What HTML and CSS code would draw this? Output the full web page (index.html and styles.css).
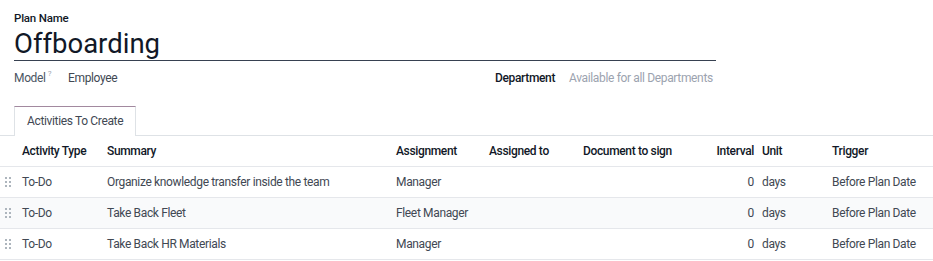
FILE: index.html
```html
<!DOCTYPE html>
<html>
<head>
<meta charset="utf-8">
<link rel="stylesheet" href="styles.css">
</head>
<body>
<div class="sheet">
  <div class="title-block">
    <label class="title-label">Plan Name</label>
    <div class="title-input">Offboarding</div>
  </div>
  <div class="fields">
    <div class="field field-left">
      <span class="flabel">Model<sup class="help">?</sup></span>
      <span class="fvalue">Employee</span>
    </div>
    <div class="field field-right">
      <span class="flabel strong">Department</span>
      <span class="fvalue placeholder">Available for all Departments</span>
    </div>
  </div>
</div>
<div class="tabs">
  <div class="tab active">Activities To Create</div>
</div>
<table class="list">
  <colgroup>
    <col class="w-handle"><col class="w-type"><col class="w-summary"><col class="w-assign"><col class="w-to"><col class="w-doc"><col class="w-int"><col class="w-unit"><col>
  </colgroup>
  <thead>
    <tr>
      <th></th>
      <th>Activity Type</th>
      <th>Summary</th>
      <th>Assignment</th>
      <th>Assigned to</th>
      <th>Document to sign</th>
      <th class="num">Interval</th>
      <th>Unit</th>
      <th>Trigger</th>
    </tr>
  </thead>
  <tbody>
    <tr>
      <td class="c-handle"><span class="handle"></span></td>
      <td>To-Do</td>
      <td>Organize knowledge transfer inside the team</td>
      <td>Manager</td>
      <td></td>
      <td></td>
      <td class="num">0</td>
      <td>days</td>
      <td>Before Plan Date</td>
    </tr>
    <tr class="alt">
      <td class="c-handle"><span class="handle"></span></td>
      <td>To-Do</td>
      <td>Take Back Fleet</td>
      <td>Fleet Manager</td>
      <td></td>
      <td></td>
      <td class="num">0</td>
      <td>days</td>
      <td>Before Plan Date</td>
    </tr>
    <tr>
      <td class="c-handle"><span class="handle"></span></td>
      <td>To-Do</td>
      <td>Take Back HR Materials</td>
      <td>Manager</td>
      <td></td>
      <td></td>
      <td class="num">0</td>
      <td>days</td>
      <td>Before Plan Date</td>
    </tr>
  </tbody>
</table>
</body>
</html>
```
FILE: styles.css
```css
* { box-sizing: border-box; }
body {
  margin: 0;
  background: #fff;
  font-family: Roboto, "Liberation Sans", sans-serif;
  font-size: 12px;
  letter-spacing: -0.35px;
  color: #414853;
}
.sheet {
  padding: 10px 0 0 14px;
  width: 716px;
}
.title-label {
  display: block;
  font-size: 11.5px;
  font-weight: 500;
  color: #111827;
  line-height: 16px;
  letter-spacing: -0.2px;
}
.title-input {
  font-size: 27.5px;
  line-height: 32px;
  color: #111827;
  border-bottom: 1px solid #374151;
  padding-top: 2px;
  white-space: nowrap;
  letter-spacing: 0;
}
.fields {
  display: flex;
  margin-top: 8px;
  height: 18px;
  line-height: 18px;
  white-space: nowrap;
}
.field { display: flex; flex-shrink: 0; }
.field-left { width: 481px; }
.flabel { color: #4b5563; width: 54px; flex-shrink: 0; }
.flabel.strong { color: #111827; font-weight: 500; width: 74px; }
.help { font-size: 8px; color: #9ca3af; vertical-align: top; line-height: 10px; margin-left: 2px; }
.fvalue { color: #414853; }
.placeholder { color: #9ca3af; }
.tabs {
  margin-top: 19px;
  border-bottom: 1px solid #dee2e6;
  padding-left: 14px;
  display: flex;
  height: 30px;
}
.tab {
  padding: 0 12px;
  line-height: 29px;
  color: #414853;
  white-space: nowrap;
}
.tab.active {
  border-top: 1px solid #a2899f;
  border-left: 1px solid #dee2e6;
  border-right: 1px solid #dee2e6;
  background: #fff;
  margin-bottom: -1px;
  height: 30px;
  width: 122px;
}
.list {
  width: 100%;
  border-collapse: collapse;
  table-layout: fixed;
}
.w-handle { width: 18px; }
.w-type { width: 85px; }
.w-summary { width: 289px; }
.w-assign { width: 93px; }
.w-to { width: 94px; }
.w-doc { width: 109px; }
.w-int { width: 70px; }
.w-unit { width: 70px; }
.list th, .list td {
  height: 31px;
  padding: 0 4px;
  text-align: left;
  white-space: nowrap;
  overflow: hidden;
  border-bottom: 1px solid #e5e7eb;
}
.list th { font-weight: 500; color: #111827; height: 30px; }
.list tr.alt td { background: #f9fafb; }
.list .num { text-align: right; }
.list .c-handle { padding: 0 0 0 4px; }
.handle {
  display: block;
  width: 6px;
  height: 10px;
  background-image: radial-gradient(circle, #adb5bd 1px, transparent 1.2px);
  background-size: 4px 4px;
  background-position: -1px -1px;
  margin-left: 1px;
}
```
